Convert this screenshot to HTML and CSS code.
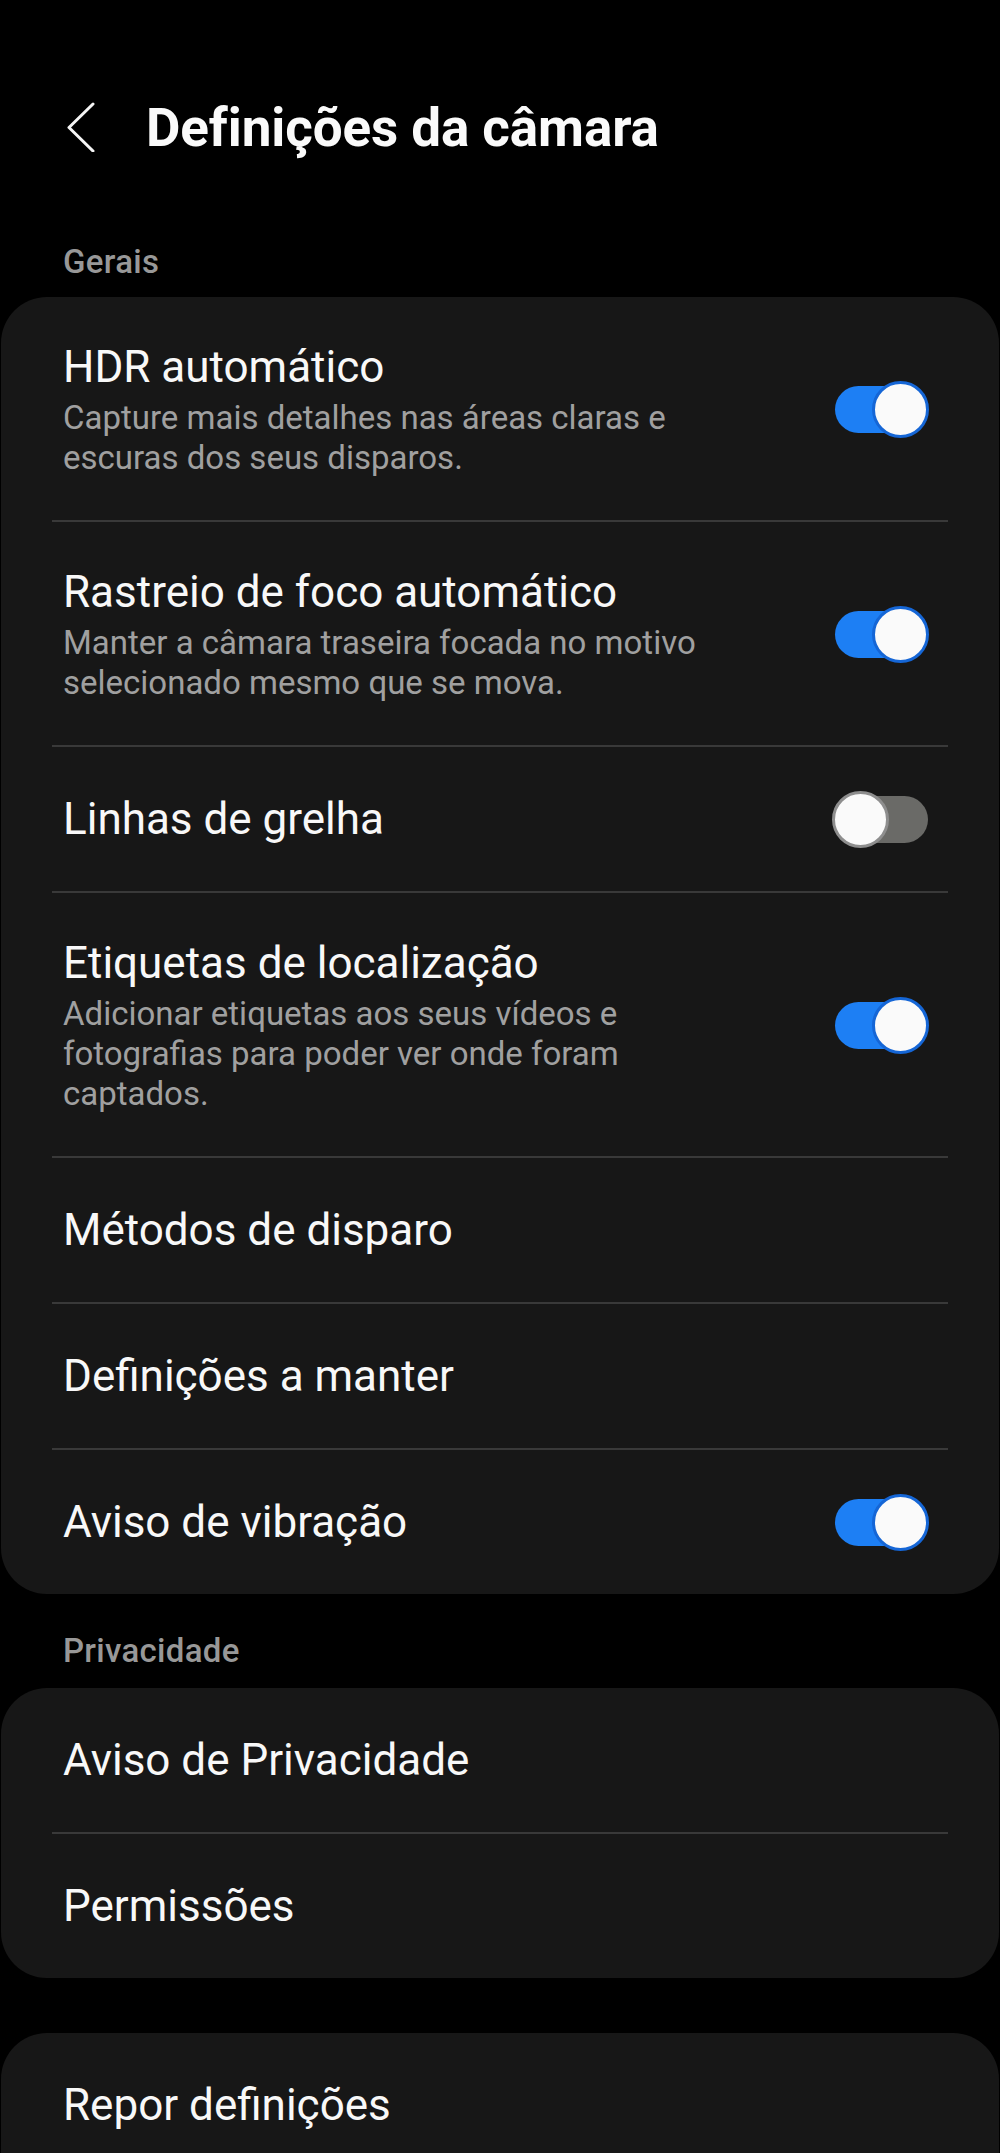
FILE: index.html
```html
<!DOCTYPE html>
<html lang="pt">
<head>
<meta charset="utf-8">
<title>Definições da câmara</title>
<link rel="stylesheet" href="styles.css">
</head>
<body>
<div class="screen">
  <header class="appbar">
    <svg class="back" width="30" height="50" viewBox="0 0 30 50" aria-hidden="true">
      <polyline points="27,2 3,25.5 27,49" fill="none" stroke="#f5f5f5" stroke-width="3" stroke-linecap="round" stroke-linejoin="round"/>
    </svg>
    <h1 class="page-title">Definições da câmara</h1>
  </header>

  <div class="section-label first">Gerais</div>
  <section class="card">
    <div class="row">
      <div class="text">
        <div class="title">HDR automático</div>
        <div class="sub">Capture mais detalhes nas áreas claras e<br>escuras dos seus disparos.</div>
      </div>
      <span class="switch on"><span class="knob"></span></span>
    </div>
    <div class="sep"></div>
    <div class="row">
      <div class="text">
        <div class="title">Rastreio de foco automático</div>
        <div class="sub">Manter a câmara traseira focada no motivo<br>selecionado mesmo que se mova.</div>
      </div>
      <span class="switch on"><span class="knob"></span></span>
    </div>
    <div class="sep"></div>
    <div class="row single">
      <div class="text">
        <div class="title">Linhas de grelha</div>
      </div>
      <span class="switch off"><span class="knob"></span></span>
    </div>
    <div class="sep"></div>
    <div class="row">
      <div class="text">
        <div class="title">Etiquetas de localização</div>
        <div class="sub">Adicionar etiquetas aos seus vídeos e<br>fotografias para poder ver onde foram<br>captados.</div>
      </div>
      <span class="switch on"><span class="knob"></span></span>
    </div>
    <div class="sep"></div>
    <div class="row single">
      <div class="text"><div class="title">Métodos de disparo</div></div>
    </div>
    <div class="sep"></div>
    <div class="row single">
      <div class="text"><div class="title">Definições a manter</div></div>
    </div>
    <div class="sep"></div>
    <div class="row single">
      <div class="text"><div class="title">Aviso de vibração</div></div>
      <span class="switch on"><span class="knob"></span></span>
    </div>
  </section>

  <div class="section-label">Privacidade</div>
  <section class="card">
    <div class="row single">
      <div class="text"><div class="title">Aviso de Privacidade</div></div>
    </div>
    <div class="sep"></div>
    <div class="row single">
      <div class="text"><div class="title">Permissões</div></div>
    </div>
  </section>

  <section class="card last">
    <div class="row single">
      <div class="text"><div class="title">Repor definições</div></div>
    </div>
  </section>
</div>
</body>
</html>
```

FILE: styles.css
```css
html, body {
  margin: 0;
  padding: 0;
  background: #000;
}

body {
  font-family: Roboto, "Noto Sans", "Liberation Sans", sans-serif;
  color: #f8f8f8;
}

.screen {
  width: 1000px;
  height: 2153px;
  overflow: hidden;
  background: #000;
}

.appbar {
  display: flex;
  align-items: center;
  height: 64px;
  padding: 96px 0 0 66px;
}

.back {
  flex: none;
  display: block;
  margin-top: -3px;
}

.page-title {
  margin: 0 0 0 50px;
  font-size: 53px;
  line-height: 64px;
  font-weight: 700;
  color: #fafafa;
  letter-spacing: -0.1px;
}

.section-label {
  margin: 37px 0 17px 63px;
  font-size: 33px;
  line-height: 40px;
  font-weight: 500;
  color: #989898;
  letter-spacing: 0.3px;
}

.section-label.first {
  margin-top: 82px;
  margin-bottom: 15px;
}

.card {
  margin: 0 1px;
  background: #171717;
  border-radius: 46px;
}

.card.last {
  margin-top: 55px;
  padding-bottom: 40px;
}

.row {
  display: flex;
  align-items: center;
  justify-content: space-between;
  padding: 44px 70px 42px 62px;
}

.row.single {
  padding-top: 46px;
  padding-bottom: 46px;
}

.text {
  min-width: 0;
}

.title {
  font-size: 44px;
  line-height: 52px;
  font-weight: 400;
  color: #f8f8f8;
  white-space: nowrap;
}

.sub {
  margin-top: 5px;
  font-size: 33px;
  line-height: 40px;
  color: #a0a0a0;
  white-space: nowrap;
}

.sep {
  height: 2px;
  margin: 0 51px;
  background: #393939;
}

.switch {
  position: relative;
  flex: none;
  width: 97px;
  height: 57px;
  margin: -3px 0;
}

.switch::before {
  content: "";
  position: absolute;
  left: 3px;
  right: 1px;
  top: 5px;
  bottom: 5px;
  border-radius: 24px;
  background: #1d7ff4;
}

.switch.off::before {
  background: #6a6a67;
}

.knob {
  position: absolute;
  top: 0;
  right: 0;
  width: 57px;
  height: 57px;
  box-sizing: border-box;
  border-radius: 50%;
  background: #fafafa;
  border: 3px solid #1566d6;
}

.switch.off .knob {
  left: 0;
  right: auto;
  border-color: #8e8e8e;
}
```
